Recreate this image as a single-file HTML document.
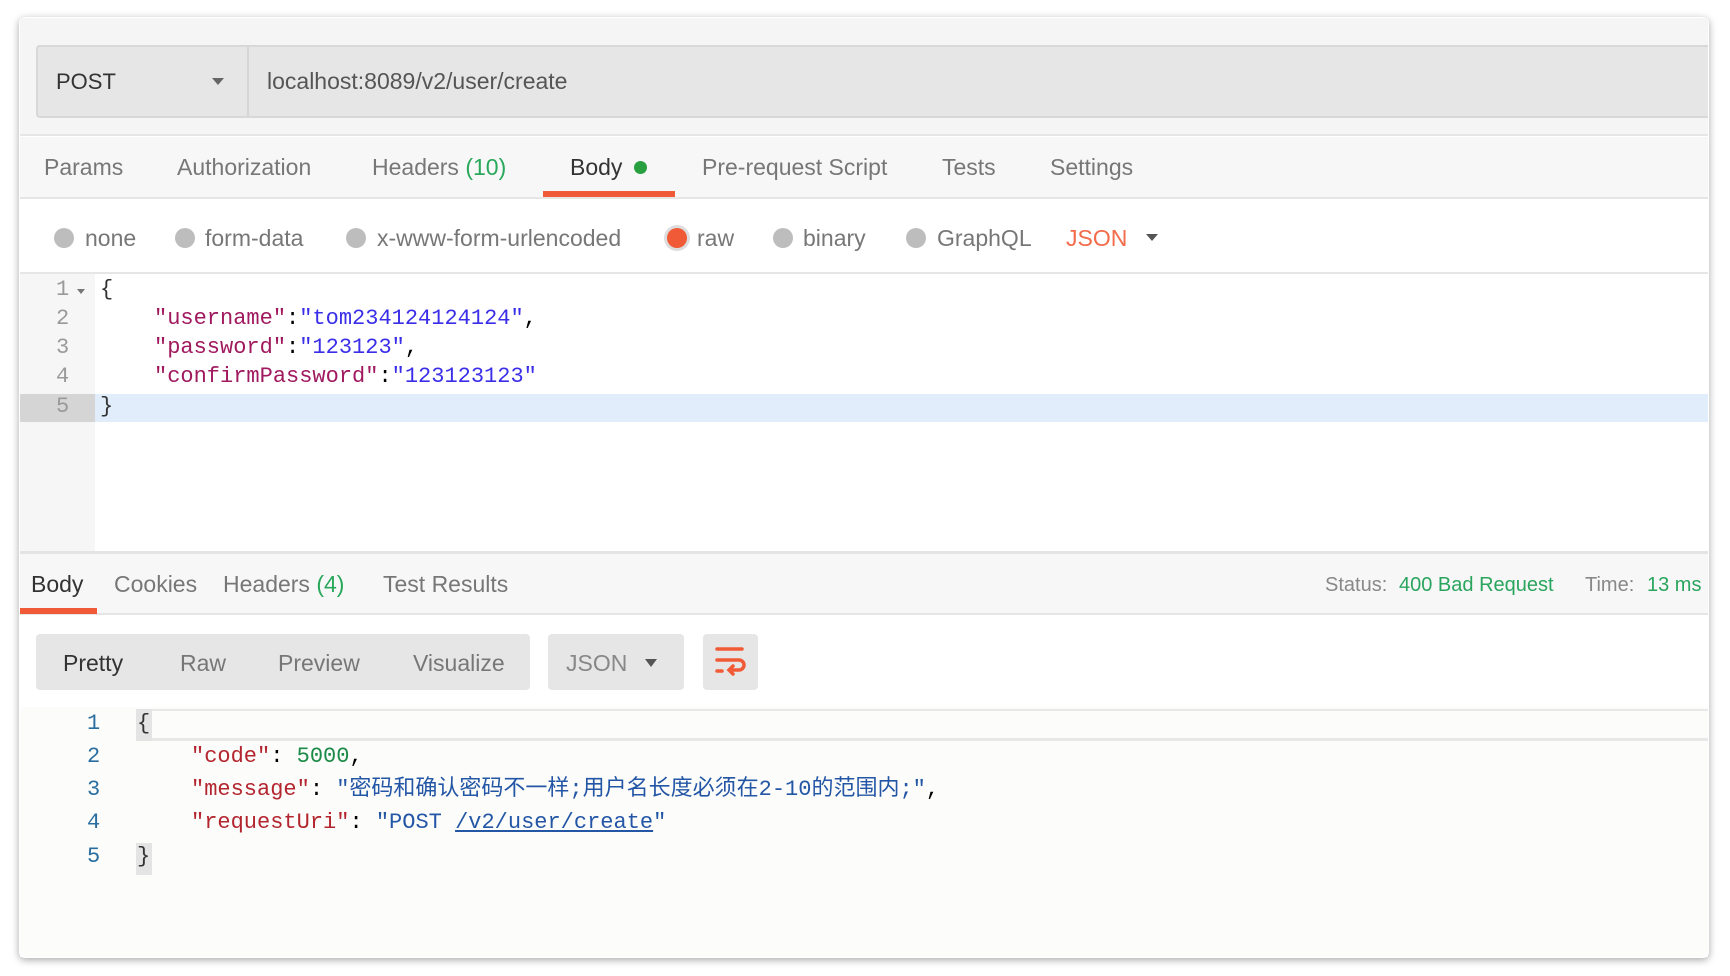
<!DOCTYPE html>
<html><head><meta charset="utf-8"><style>
*{margin:0;padding:0;box-sizing:border-box}
body{width:1730px;height:976px;background:#fff;position:relative;overflow:hidden;font-family:"Liberation Sans","Noto Sans CJK SC",sans-serif}
.a{position:absolute}
.t{position:absolute;white-space:nowrap;font-size:23px;line-height:30px;color:#777}
.m{position:absolute;white-space:nowrap;font-family:"Liberation Mono","Noto Sans CJK SC",monospace;font-size:22px;line-height:30px}
.dot{position:absolute;width:20px;height:20px;border-radius:50%;background:#bdbdbd}
.k{color:#a0195e}.s{color:#3a2ee8}
.rk{color:#b3262f}.rn{color:#1c8a48}.rs{color:#2456a6}
</style></head><body>
<div class="a" style="left:19px;top:17px;width:1690px;height:941px;background:#fff;border-radius:6px;box-shadow:0 2px 8px rgba(0,0,0,.35);overflow:hidden">
</div>
<div class="a" style="left:20px;top:18px;width:1688px;height:118px;background:#f5f5f5;border-bottom:2px solid #e6e6e6"></div>
<div class="a" style="left:36px;top:45px;width:1672px;height:73px;background:#e6e6e6;border:2px solid #d8d8d8;border-right:none;border-radius:4px 0 0 4px"></div>
<div class="a" style="left:247px;top:47px;width:2px;height:69px;background:#d6d6d6"></div>
<div class="t" style="left:56px;top:67px;color:#333;font-size:22px">POST</div>
<div class="a" style="left:212px;top:78px;border-left:6px solid transparent;border-right:6px solid transparent;border-top:7px solid #666"></div>
<div class="t" style="left:267px;top:66px;color:#555">localhost:8089/v2/user/create</div>
<div class="a" style="left:20px;top:137px;width:1688px;height:62px;background:#f7f7f7;border-bottom:2px solid #e6e6e6"></div>
<div class="t" style="left:44px;top:152px">Params</div>
<div class="t" style="left:177px;top:152px">Authorization</div>
<div class="t" style="left:372px;top:152px">Headers <span style="color:#29a85c">(10)</span></div>
<div class="t" style="left:570px;top:152px;color:#333">Body</div>
<div class="a" style="left:634px;top:161px;width:13px;height:13px;border-radius:50%;background:#29a040"></div>
<div class="a" style="left:543px;top:191px;width:132px;height:6px;background:#f05a36"></div>
<div class="t" style="left:702px;top:152px">Pre-request Script</div>
<div class="t" style="left:942px;top:152px">Tests</div>
<div class="t" style="left:1050px;top:152px">Settings</div>
<div class="dot" style="left:54px;top:228px"></div><div class="t" style="left:85px;top:223px">none</div>
<div class="dot" style="left:175px;top:228px"></div><div class="t" style="left:205px;top:223px">form-data</div>
<div class="dot" style="left:346px;top:228px"></div><div class="t" style="left:377px;top:223px">x-www-form-urlencoded</div>
<div class="dot" style="left:667px;top:228px;background:#f05a36;box-shadow:0 0 0 3px #ddd"></div><div class="t" style="left:697px;top:223px">raw</div>
<div class="dot" style="left:773px;top:228px"></div><div class="t" style="left:803px;top:223px">binary</div>
<div class="dot" style="left:906px;top:228px"></div><div class="t" style="left:937px;top:223px">GraphQL</div>
<div class="t" style="left:1066px;top:223px;color:#f26b4a">JSON</div>
<div class="a" style="left:1146px;top:234px;border-left:6px solid transparent;border-right:6px solid transparent;border-top:7px solid #555"></div>
<div class="a" style="left:20px;top:272px;width:1688px;height:2px;background:#e6e6e6"></div>
<div class="a" style="left:20px;top:274px;width:75px;height:278px;background:#f6f6f6"></div>
<div class="a" style="left:20px;top:394px;width:75px;height:28px;background:#d5d5d5"></div>
<div class="a" style="left:95px;top:394px;width:1613px;height:28px;background:#e2edfb"></div>
<div class="a" style="left:20px;top:551px;width:1688px;height:3px;background:#e4e4e4"></div>
<div class="m" style="left:56px;top:275px;color:#999">1</div>
<div class="a" style="left:77px;top:289px;border-left:4px solid transparent;border-right:4px solid transparent;border-top:5px solid #777"></div>
<div class="m" style="left:56px;top:304px;color:#999">2</div>
<div class="m" style="left:56px;top:333px;color:#999">3</div>
<div class="m" style="left:56px;top:362px;color:#999">4</div>
<div class="m" style="left:56px;top:392px;color:#999">5</div>
<div class="m" style="left:100px;top:275px;color:#333">{</div>
<div class="m" style="left:154px;top:304px"><span class="k">"username"</span>:<span class="s">"tom234124124124"</span>,</div>
<div class="m" style="left:154px;top:333px"><span class="k">"password"</span>:<span class="s">"123123"</span>,</div>
<div class="m" style="left:154px;top:362px"><span class="k">"confirmPassword"</span>:<span class="s">"123123123"</span></div>
<div class="m" style="left:100px;top:392px;color:#333">}</div>
<div class="a" style="left:20px;top:554px;width:1688px;height:61px;background:#f7f7f7;border-bottom:2px solid #e6e6e6"></div>
<div class="t" style="left:31px;top:569px;color:#333">Body</div>
<div class="a" style="left:20px;top:608px;width:77px;height:6px;background:#f05a36"></div>
<div class="t" style="left:114px;top:569px">Cookies</div>
<div class="t" style="left:223px;top:569px">Headers <span style="color:#29a85c">(4)</span></div>
<div class="t" style="left:383px;top:569px">Test Results</div>
<div class="t" style="left:1325px;top:570px;font-size:20px;color:#888">Status:</div>
<div class="t" style="left:1399px;top:570px;font-size:20px;color:#2aa55e">400 Bad Request</div>
<div class="t" style="left:1585px;top:570px;font-size:20px;color:#888">Time:</div>
<div class="t" style="left:1647px;top:570px;font-size:20px;color:#2aa55e">13 ms</div>
<div class="a" style="left:36px;top:634px;width:494px;height:56px;background:#e6e6e6;border-radius:4px"></div>
<div class="t" style="left:63px;top:648px;color:#333">Pretty</div>
<div class="t" style="left:180px;top:648px">Raw</div>
<div class="t" style="left:278px;top:648px">Preview</div>
<div class="t" style="left:413px;top:648px">Visualize</div>
<div class="a" style="left:548px;top:634px;width:136px;height:56px;background:#e6e6e6;border-radius:4px"></div>
<div class="t" style="left:566px;top:648px;color:#888">JSON</div>
<div class="a" style="left:645px;top:659px;border-left:6px solid transparent;border-right:6px solid transparent;border-top:8px solid #555"></div>
<div class="a" style="left:703px;top:634px;width:55px;height:56px;background:#e6e6e6;border-radius:4px"></div>
<svg class="a" style="left:703px;top:634px" width="55" height="56" viewBox="0 0 55 56"><g stroke="#f05a36" stroke-width="3.5" fill="none" stroke-linecap="round"><path d="M14 15H39"/><path d="M14 26H36a5 5 0 0 1 0 10H27"/><path d="M30 32l-4 4 4 4"/><path d="M14 37H19"/></g></svg>
<div class="a" style="left:20px;top:707px;width:1688px;height:250px;background:#fcfcfa"></div>
<div class="a" style="left:137px;top:709px;width:1571px;height:32px;border-top:2px solid #e8e8e8;border-bottom:3px solid #e8e8e8"></div>
<div class="a" style="left:136px;top:709px;width:16px;height:32px;background:#e4e4e4"></div>
<div class="a" style="left:136px;top:843px;width:16px;height:32px;background:#e4e4e4"></div>
<div class="m" style="left:87px;top:709px;color:#2a6ea0">1</div>
<div class="m" style="left:87px;top:742px;color:#2a6ea0">2</div>
<div class="m" style="left:87px;top:775px;color:#2a6ea0">3</div>
<div class="m" style="left:87px;top:808px;color:#2a6ea0">4</div>
<div class="m" style="left:87px;top:842px;color:#2a6ea0">5</div>
<div class="m" style="left:137px;top:709px;color:#333">{</div>
<div class="m" style="left:191px;top:742px"><span class="rk">"code"</span>: <span class="rn">5000</span>,</div>
<div class="m" style="left:191px;top:775px"><span class="rk">"message"</span>: <span class="rs">"密码和确认密码不一样;用户名长度必须在2-10的范围内;"</span>,</div>
<div class="m" style="left:191px;top:808px"><span class="rk">"requestUri"</span>: <span class="rs">"POST <span style="text-decoration:underline">/v2/user/create</span>"</span></div>
<div class="m" style="left:137px;top:842px;color:#333">}</div>
</body></html>
